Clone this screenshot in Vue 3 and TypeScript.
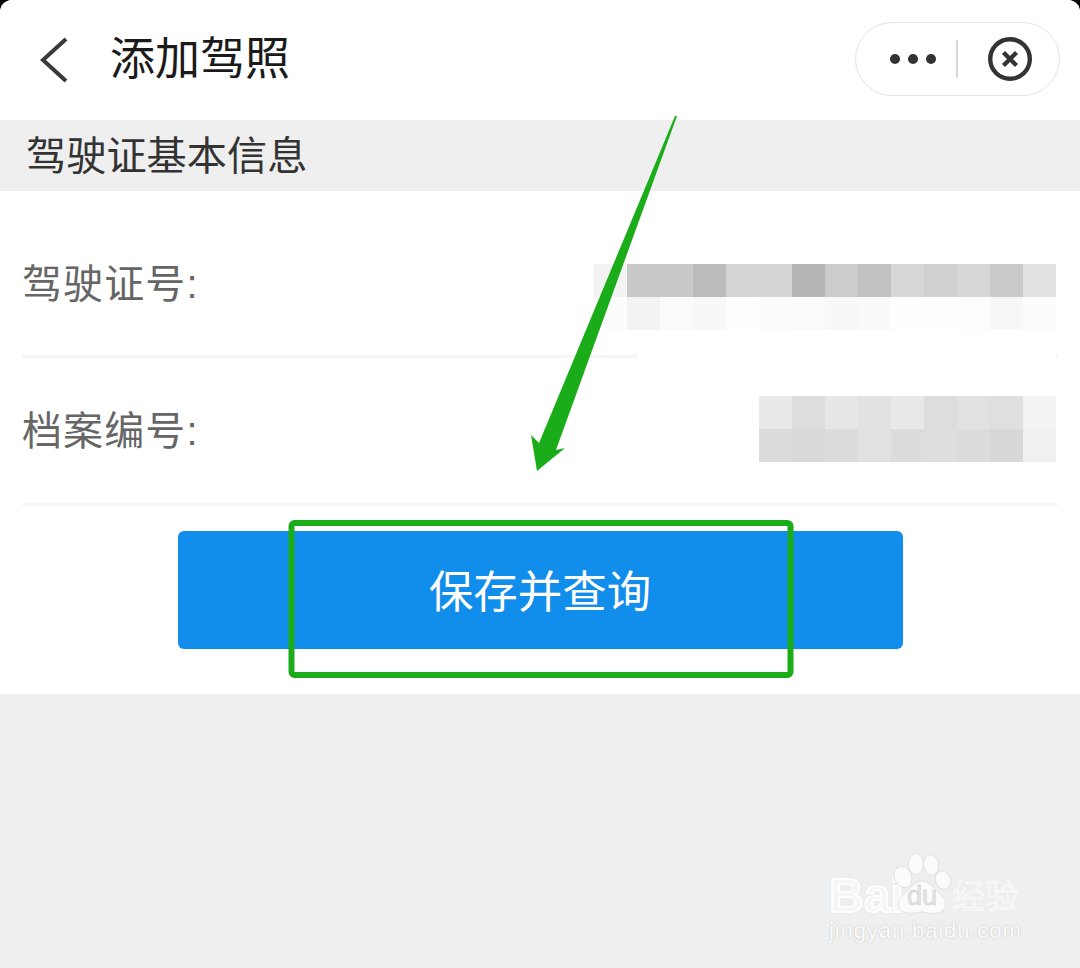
<script setup lang="ts">
const row1: string[][] = [
  ['#f3f3f3', '#c9c9c9', '#c9c9c9', '#bbbbbb', '#d4d4d4', '#d4d4d4', '#b6b6b6', '#cccccc', '#c1c1c1', '#d7d7d7', '#d1d1d1', '#d7d7d7', '#cacaca', '#e1e1e1'],
  ['#fcfcfc', '#f3f3f3', '#fbfbfb', '#f8f8f8', '#fefefe', '#fcfcfc', '#fbfbfb', '#f8f8f8', '#fafafa', '#fefefe', '#fefefe', '#fdfdfd', '#f7f7f7', '#fcfcfc'],
]
const row2: string[][] = [
  ['#e9e9e9', '#dddddd', '#e7e7e7', '#e2e2e2', '#e8e8e8', '#dddddd', '#e1e1e1', '#dfdfdf', '#f3f3f3'],
  ['#dcdcdc', '#d9d9d9', '#dcdcdc', '#e1e1e1', '#dcdcdc', '#dedede', '#dcdcdc', '#d8d8d8', '#f0f0f0'],
]
</script>

<template>
  <div class="page">
    <header class="nav">
      <svg class="back" width="30" height="46" viewBox="0 0 30 46">
        <path d="M27 2 L4 23 L27 44" fill="none" stroke="#3a3a3a" stroke-width="4" />
      </svg>
      <h1 class="title">添加驾照</h1>
      <div class="capsule">
        <svg class="dots" width="50" height="12" viewBox="0 0 50 12">
          <circle cx="6" cy="6" r="5" fill="#333" />
          <circle cx="24" cy="6" r="5" fill="#333" />
          <circle cx="42" cy="6" r="5" fill="#333" />
        </svg>
        <span class="sep"></span>
        <svg class="close" width="44" height="44" viewBox="0 0 44 44">
          <circle cx="22" cy="22" r="19.8" fill="none" stroke="#333" stroke-width="4.4" />
          <path d="M15.5 15.5 L28.5 28.5 M28.5 15.5 L15.5 28.5" stroke="#333" stroke-width="4.4" fill="none" />
        </svg>
      </div>
    </header>

    <div class="section">驾驶证基本信息</div>

    <main class="form">
      <div class="row row-a">
        <span class="label">驾驶证号:</span>
        <div class="mosaic">
          <div v-for="(cells, i) in row1" :key="i" class="mosaic-row">
            <i v-for="(c, j) in cells" :key="j" class="cell" :style="{ background: c }"></i>
          </div>
        </div>
        <span class="smudge"></span>
      </div>
      <div class="row row-b">
        <span class="label">档案编号:</span>
        <div class="mosaic">
          <div v-for="(cells, i) in row2" :key="i" class="mosaic-row">
            <i v-for="(c, j) in cells" :key="j" class="cell" :style="{ background: c }"></i>
          </div>
        </div>
      </div>
      <div class="action">
        <button class="save" type="button">保存并查询</button>
      </div>
    </main>

    <div class="rest">
      <div class="mark">
        <div class="mark-top">
          <span class="bai">Bai</span>
          <svg class="paw" width="60" height="64" viewBox="0 0 60 64">
            <g fill="#fbfbfb" stroke="#dcdcdc" stroke-width="0.8">
              <ellipse cx="11" cy="24" rx="8.5" ry="11" transform="rotate(-25 11 24)" />
              <ellipse cx="24" cy="11" rx="7.5" ry="10.5" />
              <ellipse cx="39" cy="12" rx="7.5" ry="10.5" transform="rotate(-8 39 12)" />
              <ellipse cx="51" cy="27" rx="7.5" ry="9.5" transform="rotate(-20 51 27)" />
              <path d="M30 28 C37 28 41 35 48 41 C56 47 55 59 45 60 C38 61 34 59 30 59 C26 59 22 61 15 60 C5 59 4 47 12 41 C19 35 23 28 30 28 Z" />
            </g>
            <text x="30" y="52" text-anchor="middle" class="du">du</text>
          </svg>
          <span class="jy">经验</span>
        </div>
        <div class="url">jingyan.baidu.com</div>
      </div>
    </div>

    <svg class="annot" width="1080" height="968" viewBox="0 0 1080 968">
      <polygon points="675,116 677,116 556,450 565,448 537,471 531,435 539,443" fill="#1bad19" />
      <rect x="291.5" y="523" width="499" height="152" rx="3" fill="none" stroke="#1bad19" stroke-width="6" />
    </svg>
  </div>
</template>

<style scoped>
.page {
  position: relative;
  width: 1080px;
  height: 968px;
  display: flex;
  flex-direction: column;
  background: #efefef;
  border-radius: 12px 12px 0 0;
  overflow: hidden;
  font-family: "Liberation Sans", "Noto Sans CJK SC", sans-serif;
}
.nav {
  height: 120px;
  flex: none;
  background: #fff;
  display: flex;
  align-items: center;
  padding: 0 20px 0 39px;
  box-sizing: border-box;
}
.back {
  flex: none;
  margin-top: -1px;
}
.title {
  margin: 0 0 0 41px;
  font-size: 45px;
  font-weight: 400;
  line-height: 60px;
  color: #1a1a1a;
}
.capsule {
  margin-left: auto;
  margin-top: -2px;
  width: 205px;
  height: 74px;
  box-sizing: border-box;
  border: 1.5px solid #e3e3e3;
  border-radius: 37px;
  display: flex;
  align-items: center;
  padding-left: 33px;
}
.sep {
  width: 1.5px;
  height: 38px;
  background: #d8d8d8;
  margin-left: 17px;
}
.close {
  margin-left: 30px;
}
.section {
  height: 71px;
  flex: none;
  box-sizing: border-box;
  padding-left: 26px;
  font-size: 40.2px;
  line-height: 73px;
  color: #333;
}
.form {
  height: 503px;
  flex: none;
  background: #fff;
  padding: 0 22px;
  box-sizing: border-box;
}
.row {
  position: relative;
  display: flex;
  align-items: center;
  justify-content: space-between;
  box-sizing: border-box;
  border-bottom: 3px solid #f6f6f6;
  padding-right: 2px;
}
.row-a {
  height: 167px;
  padding-top: 22px;
}
.row-a .mosaic {
  margin-top: 26px;
}
.row-b {
  height: 148px;
}
.row-b .mosaic {
  margin-bottom: 3px;
}
.label {
  font-size: 40px;
  line-height: 56px;
  color: #666;
  letter-spacing: 1.1px;
}
.row-b .label {
  margin-top: 1px;
}
.mosaic {
  display: flex;
  flex-direction: column;
}
.mosaic-row {
  display: flex;
}
.cell {
  display: block;
  width: 33px;
  height: 33px;
}
.smudge {
  position: absolute;
  left: 616px;
  right: 2px;
  bottom: -3px;
  height: 3px;
  background: #fefefe;
}
.action {
  display: flex;
  justify-content: center;
  padding-top: 25px;
}
.save {
  width: 725px;
  height: 118px;
  border: none;
  border-radius: 6px;
  background: #118dec;
  color: #fff;
  font-family: inherit;
  font-size: 44.5px;
  padding: 0 0 4px;
}
.rest {
  flex: 1;
  position: relative;
}
.mark {
  position: absolute;
  left: 829px;
  top: 159px;
  width: 195px;
}
.mark-top {
  display: flex;
  align-items: flex-end;
  height: 64px;
}
.bai {
  font-family: "Liberation Sans", sans-serif;
  font-size: 48px;
  line-height: 48px;
  font-weight: 700;
  width: 64px;
  flex: none;
  margin-bottom: -3px;
  color: #f6f6f6;
  -webkit-text-stroke: 2px #ffffff;
  text-shadow: 0 0 2px #a8a8a8;
}
.paw {
  flex: none;
  margin-left: -1px;
}
.du {
  font-family: "Liberation Sans", sans-serif;
  font-size: 27px;
  fill: #e6e6e6;
  stroke: #c8c8c8;
  stroke-width: 0.5px;
}
.jy {
  font-size: 33px;
  line-height: 46px;
  margin-bottom: -3px;
  color: #ededed;
  -webkit-text-stroke: 1.2px #fbfbfb;
  text-shadow: 0 0 1.5px #c4c4c4;
  white-space: nowrap;
}
.url {
  font-family: "Liberation Sans", sans-serif;
  font-size: 22px;
  line-height: 30px;
  margin-top: -1px;
  letter-spacing: 0.9px;
  color: #fcfcfc;
  text-shadow: 0 0 1.5px #b4b4b4;
  white-space: nowrap;
}
.annot {
  position: absolute;
  inset: 0;
  pointer-events: none;
}
</style>

<style>
html, body {
  background: #000;
  margin: 0;
}
</style>
